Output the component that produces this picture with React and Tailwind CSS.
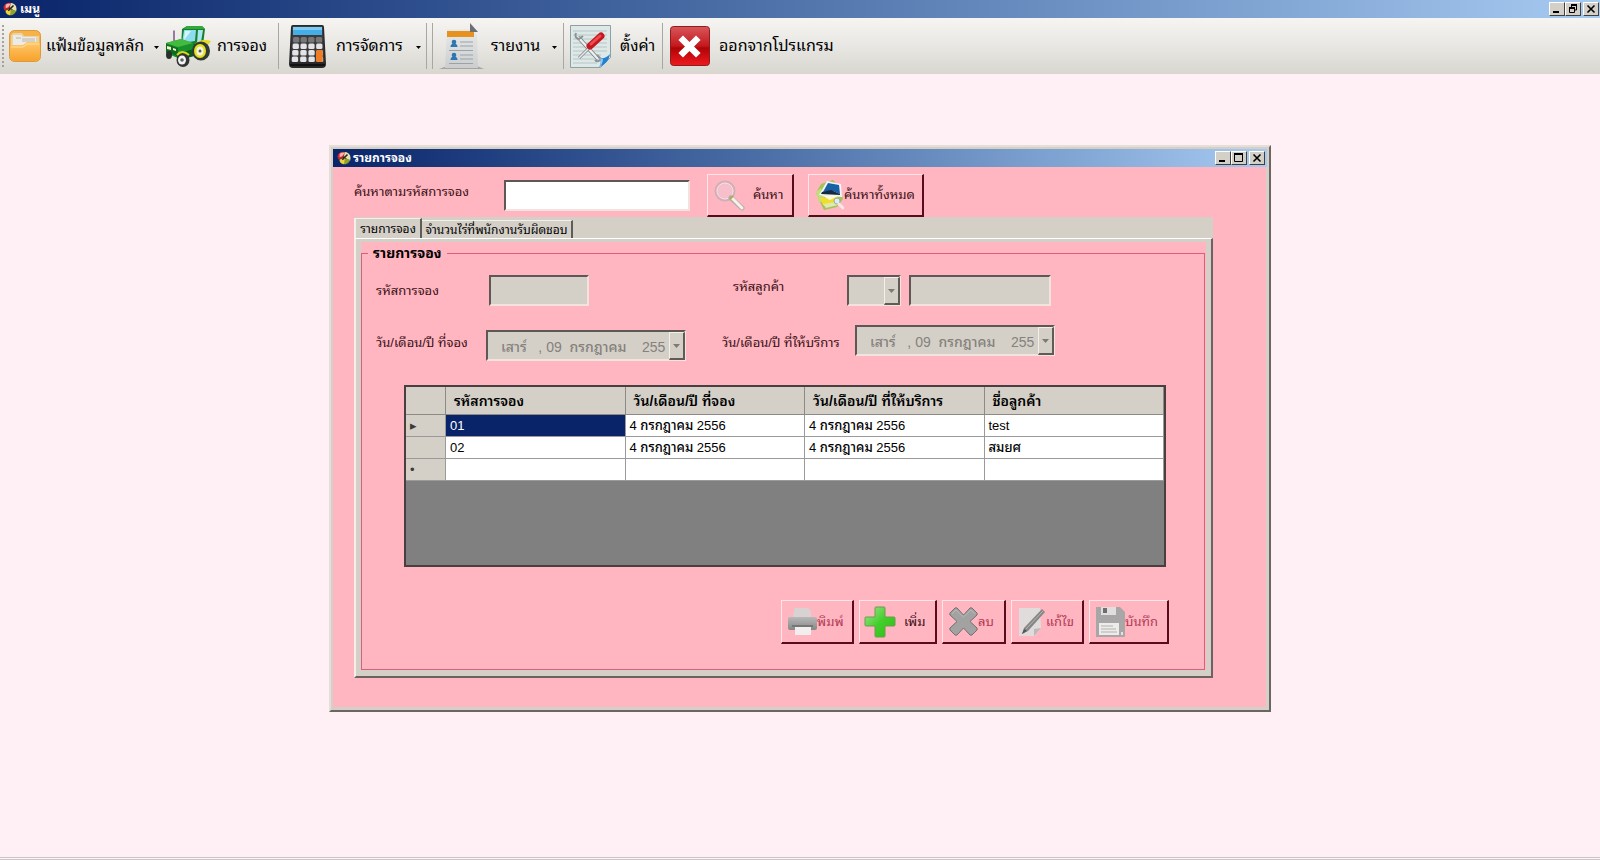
import React from "react";

const SANS =
  "font-['Liberation_Sans','Noto_Sans_Thai_Looped','Loma','Garuda','Waree','Noto_Sans_Thai',sans-serif]";
const SUNKEN =
  "border-2 border-t-[#5f5755] border-l-[#5f5755] border-r-[#f3e3df] border-b-[#f3e3df]";
const FIELD = `${SUNKEN} h-[31px] rounded-none bg-[#d4d0c8] outline-none`;

/* ---------- icons ---------- */

function AppIcon() {
  return (
    <svg className="h-[14px] w-[14px] shrink-0" viewBox="0 0 16 16" aria-hidden="true">
      <path d="M2 3Q4 0 9 1L10 4 6 8 2 10Q-1 6 2 3z" fill="#c8242c" />
      <path d="M3 3Q6 1 9 2L6 6 3 7z" fill="#f3b5ae" />
      <path d="M9 1Q13 1 15 5 16 8 15 11L10 8 8 6z" fill="#e6e2b4" />
      <path d="M3 10 8 8 15 10Q14 14 10 15 5 16 3 12z" fill="#8fa030" />
      <path d="M3 10 9 7 8 15 4 13z" fill="#f0d33c" />
      <path d="M6 10 12 4" stroke="#2a2410" strokeWidth="1.800" />
    </svg>
  );
}

function FolderIcon() {
  return (
    <svg className="h-8 w-8 shrink-0" viewBox="0 0 32 32" aria-hidden="true">
      <defs>
        <linearGradient id="folder" x1="0" y1="0" x2="0" y2="1">
          <stop offset="0" stopColor="#ffc86a" />
          <stop offset="1" stopColor="#f8a22c" />
        </linearGradient>
      </defs>
      <rect x=".5" y=".5" width="31" height="31" rx="5" fill="#f8b24a" stroke="#dc9a3a" />
      <path d="M2 7q0-4 4-4h7l2 3h15v9H2z" fill="#e9d3a8" />
      <path d="M4 5h8l2 2h13v9H4z" fill="#ecebe6" />
      <path d="M13 9h13M13 11h13M7 8h5" stroke="#b9b6ae" />
      <path d="M1 17q0-2 2-2h11l4-3h11q2 0 2 2v12q0 5-5 5H6q-5 0-5-5z" fill="url(#folder)" />
      <path d="M2 17h12l4-3h12" fill="none" stroke="#ffe0a0" />
    </svg>
  );
}

function TractorIcon() {
  return (
    <svg className="h-[43px] w-[47px] shrink-0" viewBox="0 0 47 43" aria-hidden="true">
      <path d="M8 5.500h2v12H8z" fill="#9a7ba0" />
      <path d="M17 4 22 1h15l3 3-2 16 2 8-14 3-10-8z" fill="#15812a" />
      <path d="M22 1h15l3 3H19z" fill="#35a83a" />
      <path d="M19 5h12l-1 11-13 2z" fill="#8fdcf0" />
      <path d="M20 6h6l-7 9z" fill="#d6f5fb" />
      <path d="M33 5h5l-2 12-4 1z" fill="#a9e6f2" />
      <path d="M1 18 16 14l12 4-1 13-12 3L1 28z" fill="#18912b" />
      <path d="M1 18 16 14l12 4-15 4z" fill="#44bb3e" />
      <path d="M1 19l12 4v8L1 27z" fill="#0d6a20" />
      <path d="M2 21l4 1v3l-4-1zM8 23l3 1v2l-3-1z" fill="#f3f5c8" />
      <path d="M10 29 29 24l4 6-18 5z" fill="#0b5a1c" />
      <path d="M30 19q6-6 16-3l-2 3q-8-2-11 4z" fill="#e5db1f" />
      <ellipse cx="36" cy="26" rx="9" ry="9.500" fill="#303a34" />
      <ellipse cx="35" cy="26" rx="6" ry="7" fill="#e6e01f" />
      <ellipse cx="35" cy="26" rx="3.500" ry="4.500" fill="#f4f4e6" />
      <circle cx="35" cy="26" r="1.500" fill="#565c50" />
      <ellipse cx="18" cy="35" rx="6.500" ry="7" fill="#303434" />
      <ellipse cx="17" cy="35" rx="4" ry="4.500" fill="#f4f4f2" />
      <circle cx="17" cy="35" r="1.800" fill="#5f6464" />
      <ellipse cx="4" cy="30" rx="3" ry="4" fill="#2b302c" />
      <path d="M12 30q5-6 12 0" fill="none" stroke="#d8d51e" strokeWidth="2" />
    </svg>
  );
}

function CalculatorIcon() {
  const rows = [0, 1, 2, 3];
  return (
    <svg className="h-[43px] w-[39px] shrink-0" viewBox="0 0 39 43" aria-hidden="true">
      <path d="M5 0h29q2 0 2 2l2 37q0 4-4 4H5q-4 0-4-4L3 2q0-2 2-2z" fill="#292929" />
      <path d="M5 1h29l1 2 1 34H3L4 3z" fill="#3b3b3b" />
      <rect x="5" y="2" width="29" height="8" fill="#45aee8" />
      <path d="M5 2h29v3H5z" fill="#7accf4" />
      {rows.map((r) =>
        rows.map((c) => (
          <rect
            key={`${r}${c}`}
            x={5 - r * 0.4 + c * (7.6 + r * 0.25)}
            y={12 + r * 6.500}
            width="6.300"
            height="5.500"
            rx="1.500"
            fill={r === 0 ? "#77777a" : "#e4e4e8"}
          />
        ))
      )}
      <rect x="28" y="25" width="6.800" height="12" rx="1.500" fill="#ee7d28" />
      <path d="M2 40h35" stroke="#111" strokeWidth="2" />
    </svg>
  );
}

function ReportIcon() {
  return (
    <svg className="h-[47px] w-[45px] shrink-0" viewBox="0 0 45 47" aria-hidden="true">
      <defs>
        <linearGradient id="sheet" x1="0" y1="0" x2="0" y2="1">
          <stop offset="0" stopColor="#e9eaea" />
          <stop offset="1" stopColor="#cbcdcf" />
        </linearGradient>
      </defs>
      <path d="M0 46 8 43h30l7 3z" fill="#a5a5a3" />
      <path d="M8 6h24l6 6 1 33H6z" fill="url(#sheet)" />
      <path d="M8 8h27v6H8z" fill="#e7921e" />
      <path d="M31 0 39 9h-8z" fill="#6c7073" />
      <g fill="#2d76b0">
        <circle cx="15" cy="19" r="2.300" />
        <path d="M11.500 24q0-3.500 3.500-3.500t3.500 3.500z" />
        <circle cx="15" cy="32" r="2.300" />
        <path d="M11.500 37q0-3.500 3.500-3.500t3.500 3.500z" />
      </g>
      <path
        d="M21 19h13M21 23h13M21 32h13M21 36h13M10 27.500h24M10 40.500h24"
        stroke="#99a3a8"
        strokeWidth="1.200"
      />
    </svg>
  );
}

function SettingsIcon() {
  return (
    <svg className="h-11 w-[43px] shrink-0" viewBox="0 0 43 44" aria-hidden="true">
      <path d="M1.500 1.500h40v32l-10 10h-30z" fill="#dde8e7" stroke="#8fa0a4" />
      <path
        d="M4 7h34M4 11h34M4 15h34M4 19h34M4 23h34M4 27h34M4 31h28M4 35h26M4 39h24"
        stroke="#b6c6c7"
      />
      <path d="M9 13 29 35" stroke="#777c80" strokeWidth="4" />
      <path d="M9 13 29 35" stroke="#eef0f1" strokeWidth="2.500" />
      <path d="M7 9q-2 5 3 6l4-3M26 36q3 3 6-1l-4-4" fill="none" stroke="#8d9296" strokeWidth="2" />
      <path d="M10 34 22 22" stroke="#85898c" strokeWidth="3" />
      <path d="M10 34 22 22" stroke="#e9ebec" strokeWidth="1.500" />
      <path d="M21 22 32 12" stroke="#c4161f" strokeWidth="7" strokeLinecap="round" />
      <path d="M22 20 31 12" stroke="#ee4a50" strokeWidth="3" strokeLinecap="round" />
      <path d="M30 43q3-3 1-9 6 1 10-4-1 9-11 13z" fill="#2182d0" />
      <path d="M30 43q3-3 1-9l3 1q0 5-4 8z" fill="#8fc8f2" />
    </svg>
  );
}

function ExitIcon() {
  return (
    <svg className="h-10 w-10 shrink-0" viewBox="0 0 40 40" aria-hidden="true">
      <defs>
        <linearGradient id="exit" x1="0" y1="0" x2="0" y2="1">
          <stop offset="0" stopColor="#d8575a" />
          <stop offset=".5" stopColor="#c4181d" />
          <stop offset=".55" stopColor="#b00408" />
          <stop offset="1" stopColor="#ee1a1e" />
        </linearGradient>
      </defs>
      <rect x=".5" y=".5" width="39" height="39" rx="3" fill="url(#exit)" stroke="#8f1c1e" />
      <path d="M13 14 26 27M26 14 13 27" stroke="#fff" strokeWidth="6.500" strokeLinecap="square" />
    </svg>
  );
}

function SearchIcon() {
  return (
    <svg className="h-[31px] w-[31px] shrink-0" viewBox="0 0 31 31" aria-hidden="true">
      <circle cx="11" cy="11" r="9.500" fill="#f6bfcb" stroke="#cfb0b8" strokeWidth="2" />
      <circle cx="11" cy="11" r="8" fill="none" stroke="#f2dfe2" />
      <path d="M17 18 28 28" stroke="#b5aaa4" strokeWidth="5" strokeLinecap="round" />
      <path d="M18 18 28 28" stroke="#f5f2ee" strokeWidth="3" strokeLinecap="round" />
      <path d="M16 19 19 16" stroke="#a9b24a" strokeWidth="2" />
    </svg>
  );
}

function SearchAllIcon() {
  return (
    <svg className="h-[30px] w-[28px] shrink-0" viewBox="0 0 28 30" aria-hidden="true">
      <path d="M5 4 17 0l6 6 4 13-6 8-13 3-4-8-4-9z" fill="#a4c455" />
      <path d="M0 12 5 8l4 12-6 3z" fill="#c4dc80" />
      <path d="M11 1 25 4l1 13L3 15z" fill="#f2f5f7" />
      <path d="M12 3 23 5l1 9-7-3-10 1z" fill="#1860a8" />
      <path d="M6 12 15 10l9 4v1L5 14z" fill="#152a3c" />
      <path d="M4 18 22 17l-3 7-12 1z" fill="#f1dd2c" />
      <path d="M5 15 22 16l-8 4z" fill="#fbf8e4" />
      <path d="M7 24 20 22l2 3-12 3z" fill="#dfe8b0" />
      <circle cx="21" cy="21" r="3" fill="#e0ebec" stroke="#9aa9a8" />
      <path d="M23 24 27 28" stroke="#f0ebe6" strokeWidth="3" strokeLinecap="round" />
    </svg>
  );
}

function PrinterIcon() {
  return (
    <svg className="h-[29px] w-[29px] shrink-0" viewBox="0 0 29 29" aria-hidden="true">
      <defs>
        <linearGradient id="printer" x1="0" y1="0" x2="0" y2="1">
          <stop offset="0" stopColor="#b9b8b8" />
          <stop offset="1" stopColor="#858787" />
        </linearGradient>
      </defs>
      <path d="M6 3q0-2 2-2h12l3 3v7H5z" fill="#d8d2d2" />
      <path d="M2 10h25q2 0 2 2v9q0 2-2 2H2q-2 0-2-2v-9q0-2 2-2z" fill="url(#printer)" />
      <path d="M4 18h21v2H4z" fill="#757777" />
      <path d="M7 20h16v8H7z" fill="#f3eeee" />
    </svg>
  );
}

function PlusIcon() {
  return (
    <svg className="h-8 w-8 shrink-0" viewBox="0 0 32 32" aria-hidden="true">
      <defs>
        <linearGradient id="plus" x1="0" y1="0" x2="1" y2="1">
          <stop offset="0" stopColor="#a5e59a" />
          <stop offset=".5" stopColor="#43cf2c" />
          <stop offset="1" stopColor="#2bbd12" />
        </linearGradient>
      </defs>
      <path
        d="M12 1h8q1 0 1 1v9h9q1 0 1 1v7q0 1-1 1h-9v10q0 1-1 1h-8q-1 0-1-1V20H2q-1 0-1-1v-7q0-1 1-1h9V2q0-1 1-1z"
        fill="url(#plus)"
        stroke="#6f9a4c"
      />
    </svg>
  );
}

function CrossIcon() {
  return (
    <svg className="h-[29px] w-[29px] shrink-0" viewBox="0 0 29 29" aria-hidden="true">
      <path
        d="M1 6 6 1q1-.5 2 0l6.500 7L21 1q1-.5 2 0l5 5q.5 1 0 2l-7 6.500 7 6.500q.5 1 0 2l-5 5q-1 .5-2 0l-6.500-7L8 28q-1 .5-2 0l-5-5q-.5-1 0-2l7-6.500L1 8q-.5-1 0-2z"
        fill="#a2a2a2"
        stroke="#747070"
      />
      <path d="M3 7 7 3l7.500 7L22 3l4 4" fill="none" stroke="#b9b7b7" />
    </svg>
  );
}

function EditIcon() {
  return (
    <svg className="h-[30px] w-7 shrink-0" viewBox="0 0 28 30" aria-hidden="true">
      <path d="M1 1h21l1 20-7 8H1z" fill="#e0dcdc" />
      <path d="M16 29v-7l7-1z" fill="#bdb9b9" />
      <path d="M4 27 6 21 24 2l3 3L10 24z" fill="#868686" />
      <path d="M8 22 25 4" stroke="#b8b8b8" />
      <path d="M4 27 6 22l3 2z" fill="#555" />
    </svg>
  );
}

function SaveIcon() {
  return (
    <svg className="h-[30px] w-[29px] shrink-0" viewBox="0 0 29 30" aria-hidden="true">
      <path d="M0 0h24l5 5v24q0 1-1 1H0z" fill="#a8a6a6" />
      <path d="M5 0h15v8H5z" fill="#e0dede" />
      <path d="M7 1h4v5H7z" fill="#6e6e6e" />
      <path d="M3 16h20v12H3z" fill="#ececea" />
      <path d="M5 19h12M5 22h15M5 25h16" stroke="#b3b1b1" />
      <path d="M25 25h2v3h-2z" fill="#e3e1e1" />
    </svg>
  );
}

/* ---------- window chrome ---------- */

function ChromeButton({ label, children }) {
  return (
    <button
      type="button"
      aria-label={label}
      className="flex h-[14px] w-4 items-center justify-center border border-t-white border-r-[#404040] border-b-[#404040] border-l-white bg-[#d4d0c8] text-black"
    >
      <svg className="h-[10px] w-[10px]" viewBox="0 0 10 10" aria-hidden="true">
        {children}
      </svg>
    </button>
  );
}

function WindowControls({ restored }) {
  return (
    <div className="flex">
      <ChromeButton label="Minimize">
        <path d="M1 7h6v2H1z" />
      </ChromeButton>
      {restored ? (
        <ChromeButton label="Maximize">
          <path d="M.5 1h8v7.500h-8z" fill="none" stroke="#000" />
          <path d="M0 0h9v2H0z" />
        </ChromeButton>
      ) : (
        <ChromeButton label="Restore">
          <path d="M3.500 3V1h5v5H7M1.500 4.500h5v4h-5z" fill="none" stroke="#000" />
          <path d="M3 0h6v2H3zM1 3h6v2H1z" />
        </ChromeButton>
      )}
      <span className="w-[2px]" />
      <ChromeButton label="Close">
        <path d="M1.500 1.500 8.500 8.500M8.500 1.500 1.500 8.500" stroke="#000" strokeWidth="1.600" />
      </ChromeButton>
    </div>
  );
}

/* ---------- toolbar ---------- */

function Separator() {
  return <span className="h-[46px] w-px shrink-0 bg-[#a9a7a2]" />;
}

function ToolItem({ icon, label, menu, labelClass }) {
  return (
    <button type="button" className="flex h-12 shrink-0 items-center text-base text-black">
      {icon}
      <span className={`text-left whitespace-nowrap ${labelClass}`}>{label}</span>
      {menu && (
        <svg className="mt-[2px] h-[3px] w-[5px]" viewBox="0 0 5 3" aria-hidden="true">
          <path d="M0 0h5L2.500 3z" />
        </svg>
      )}
    </button>
  );
}

/* ---------- form parts ---------- */

function PinkButton({ icon, children, disabled, className }) {
  return (
    <button
      type="button"
      disabled={disabled}
      className={`flex items-center border-t border-r-2 border-b-2 border-l border-t-[#ffe6ea] border-r-[#5a0a1c] border-b-[#5a0a1c] border-l-[#ffe6ea] bg-[#ffb6c1] text-[13px] whitespace-nowrap ${
        disabled ? "text-[#b23a55]" : "text-[#3b1016]"
      } ${className}`}
    >
      {icon}
      {children}
    </button>
  );
}

function DropArrow() {
  return (
    <span className="pointer-events-none absolute top-[2px] right-[1px] bottom-[1px] flex w-4 items-center justify-center border-t border-r-2 border-b-2 border-l border-t-[#f3f0ea] border-r-[#5f5b57] border-b-[#5f5b57] border-l-[#f3f0ea] bg-[#d4d0c8]">
      <svg className="h-1 w-[7px]" viewBox="0 0 7 4" aria-hidden="true">
        <path d="M0 0h7L3.500 4z" fill="#7d7974" />
      </svg>
    </span>
  );
}

function DateField({ id }) {
  return (
    <div className="relative w-[200px]">
      <input
        id={id}
        type="text"
        disabled
        defaultValue="เสาร์   , 09  กรกฎาคม    255"
        className={`${FIELD} w-full pr-4 pl-[13px] text-sm font-medium text-[#85817c]`}
      />
      <DropArrow />
    </div>
  );
}

const ROWS = [
  { mark: "▸", id: "01", booked: "4 กรกฎาคม 2556", service: "4 กรกฎาคม 2556", name: "test" },
  { mark: "", id: "02", booked: "4 กรกฎาคม 2556", service: "4 กรกฎาคม 2556", name: "สมยศ" },
  { mark: "•", id: "", booked: "", service: "", name: "" },
];

function BookingTable() {
  const head = "border-r border-b border-[#8d8a85] pl-2 text-left font-semibold";
  const cell = "border-r border-b border-[#9a9a9a] pl-1";
  return (
    <div className="h-[182px] border-2 border-[#4a3f40] bg-[#808080]">
      <table className="w-full table-fixed border-separate border-spacing-0 text-sm leading-[18px] whitespace-nowrap text-black">
        <colgroup>
          <col className="w-10" />
          <col />
          <col />
          <col />
          <col />
        </colgroup>
        <thead>
          <tr className="h-7 bg-[#d4d0c8]">
            <th className={head} aria-label="แถว" />
            <th className={head}>รหัสการจอง</th>
            <th className={head}>วัน/เดือน/ปี ที่จอง</th>
            <th className={head}>วัน/เดือน/ปี ที่ให้บริการ</th>
            <th className={head}>ชื่อลูกค้า</th>
          </tr>
        </thead>
        <tbody className="text-[13px] font-medium">
          {ROWS.map((row, i) => (
            <tr key={i} className="h-[22px] bg-white">
              <td className={`${cell} bg-[#d4d0c8] text-[#3d3a38]`}>{row.mark}</td>
              <td className={`${cell} ${i === 0 ? "bg-[#0a246a] text-white" : ""}`}>{row.id}</td>
              <td className={cell}>{row.booked}</td>
              <td className={cell}>{row.service}</td>
              <td className={cell}>{row.name}</td>
            </tr>
          ))}
        </tbody>
      </table>
    </div>
  );
}

function BookingForm() {
  const label = "shrink-0 text-[13px] whitespace-nowrap text-[#3b1016]";
  return (
    <fieldset className="mr-px flex h-[428px] flex-col border border-[#d9607a] pr-[38px] pl-[14px]">
      <legend className="-ml-2 px-[5px] text-sm leading-[22px] font-bold text-black">รายการจอง</legend>
      <div className="mt-[11px] flex h-[31px] items-center">
        <label htmlFor="booking-id" className={`${label} w-[113px]`}>รหัสการจอง</label>
        <input id="booking-id" type="text" disabled className={`${FIELD} w-[100px]`} />
        <label htmlFor="customer-id" className={`${label} ml-36 w-[114px] pb-2`}>รหัสลูกค้า</label>
        <div className="relative w-[54px]">
          <select id="customer-id" disabled className={`${FIELD} w-full appearance-none opacity-100`} />
          <DropArrow />
        </div>
        <input aria-label="ชื่อลูกค้า" type="text" disabled className={`${FIELD} ml-2 w-[142px]`} />
      </div>
      <div className="mt-[19px] flex h-9 items-center">
        <label htmlFor="booked-date" className={`${label} w-[110px]`}>วัน/เดือน/ปี ที่จอง</label>
        <div className="self-end">
          <DateField id="booked-date" />
        </div>
        <label htmlFor="service-date" className={`${label} ml-9 w-[133px]`}>วัน/เดือน/ปี ที่ให้บริการ</label>
        <div className="self-start">
          <DateField id="service-date" />
        </div>
      </div>
      <div className="mt-6 ml-7">
        <BookingTable />
      </div>
      <div className="mt-[33px] -mr-[3px] flex justify-end gap-[5px]">
        <PinkButton icon={<PrinterIcon />} disabled className="h-11 w-[73px] pl-[6px]">พิมพ์</PinkButton>
        <PinkButton icon={<PlusIcon />} className="h-11 w-[78px] gap-2 pl-1">เพิ่ม</PinkButton>
        <PinkButton icon={<CrossIcon />} disabled className="h-11 w-[64px] pl-[6px]">ลบ</PinkButton>
        <PinkButton icon={<EditIcon />} disabled className="h-11 w-[73px] pl-[6px]">แก้ไข</PinkButton>
        <PinkButton icon={<SaveIcon />} disabled className="h-11 w-20 pl-[6px]">บันทึก</PinkButton>
      </div>
    </fieldset>
  );
}

function BookingWindow() {
  return (
    <section className="flex h-[567px] w-[942px] flex-col border-2 border-t-[#e6ded8] border-r-[#6b6664] border-b-[#6b6664] border-l-[#e6ded8] bg-[#d4d0c8] p-[2px]">
      <header className="flex h-[18px] items-center bg-linear-to-r from-[#0a246a] to-[#a6caf0] pr-[2px] pl-1">
        <AppIcon />
        <h2 className="ml-[2px] flex-1 text-xs leading-4 font-bold text-white">รายการจอง</h2>
        <WindowControls restored />
      </header>
      <div className="mr-px mb-px flex-1 bg-[#ffb6c1] pr-[53px] pl-[21px]">
        <form className="flex h-[50px] pt-[7px]" onSubmit={(e) => e.preventDefault()}>
          <label htmlFor="search" className="mt-2 w-[150px] text-[13px] leading-5 whitespace-nowrap text-[#3b1016]">
            ค้นหาตามรหัสการจอง
          </label>
          <input
            id="search"
            type="text"
            className={`${SUNKEN} mt-[6px] h-[31px] w-[186px] rounded-none bg-white outline-none`}
          />
          <PinkButton icon={<SearchIcon />} className="ml-[17px] h-[43px] w-[87px] gap-2 pl-[6px]">ค้นหา</PinkButton>
          <PinkButton icon={<SearchAllIcon />} className="ml-[14px] h-[43px] w-[116px] pl-[7px]">ค้นหาทั้งหมด</PinkButton>
        </form>
        <div className="bg-[#d4d0c8]">
          <div role="tablist" className="flex h-[21px] items-end text-xs leading-4 text-black">
            <button
              role="tab"
              aria-selected="true"
              type="button"
              className="h-5 w-[68px] border-t border-r-2 border-l-2 border-t-[#f3efe9] border-r-[#5f5b57] border-l-[#f3efe9] whitespace-nowrap"
            >
              รายการจอง
            </button>
            <button
              role="tab"
              aria-selected="false"
              type="button"
              className="h-[18px] w-[151px] border-t border-r-2 border-t-[#f3efe9] border-r-[#5f5b57] whitespace-nowrap"
            >
              จำนวนไร่ที่พนักงานรับผิดชอบ
            </button>
          </div>
          <div className="border-t border-r-2 border-b-2 border-l-2 border-t-white border-r-[#6b6360] border-b-[#6b6360] border-l-[#f3efe9] pt-[3px] pr-[5px] pb-[6px] pl-[5px]">
            <div className="bg-[#ffb6c1]">
              <BookingForm />
            </div>
          </div>
        </div>
      </div>
    </section>
  );
}

export default function App() {
  return (
    <div className={`flex min-h-screen flex-col bg-[#fff0f5] ${SANS}`}>
      <header className="flex h-[18px] items-center bg-linear-to-r from-[#0a246a] to-[#a6caf0] pr-px pl-[3px]">
        <AppIcon />
        <h1 className="ml-[3px] flex-1 text-xs leading-4 font-bold text-white">เมนู</h1>
        <WindowControls />
      </header>
      <nav className="flex h-14 items-center bg-linear-to-b from-[#f6f5f2] via-[#e8e7e3] to-[#d8d6cf] pl-[2px]">
        <span className="mr-[5px] h-[42px] border-l-2 border-dotted border-[#a5a29c]" />
        <ToolItem icon={<FolderIcon />} label="แฟ้มข้อมูลหลัก" labelClass="ml-[5px] w-[108px]" menu />
        <span className="w-[6px]" />
        <ToolItem icon={<TractorIcon />} label="การจอง" labelClass="ml-[5px] w-[61px]" />
        <Separator />
        <span className="w-[9px]" />
        <ToolItem icon={<CalculatorIcon />} label="การจัดการ" labelClass="ml-[9px] w-20" menu />
        <span className="w-[5px]" />
        <Separator />
        <span className="w-[5px]" />
        <Separator />
        <span className="w-[6px]" />
        <ToolItem icon={<ReportIcon />} label="รายงาน" labelClass="ml-[7px] w-[61px]" menu />
        <span className="w-[6px]" />
        <Separator />
        <span className="w-[5px]" />
        <ToolItem icon={<SettingsIcon />} label="ตั้งค่า" labelClass="ml-2 w-[42px]" />
        <Separator />
        <span className="w-[7px]" />
        <ToolItem icon={<ExitIcon />} label="ออกจากโปรแกรม" labelClass="ml-[9px]" />
      </nav>
      <main className="flex flex-1 items-start justify-center pt-[71px]">
        <BookingWindow />
      </main>
      <footer className="h-[3px] border-t border-b border-[#c9c5c8] bg-[#fdf4f6]" />
    </div>
  );
}
